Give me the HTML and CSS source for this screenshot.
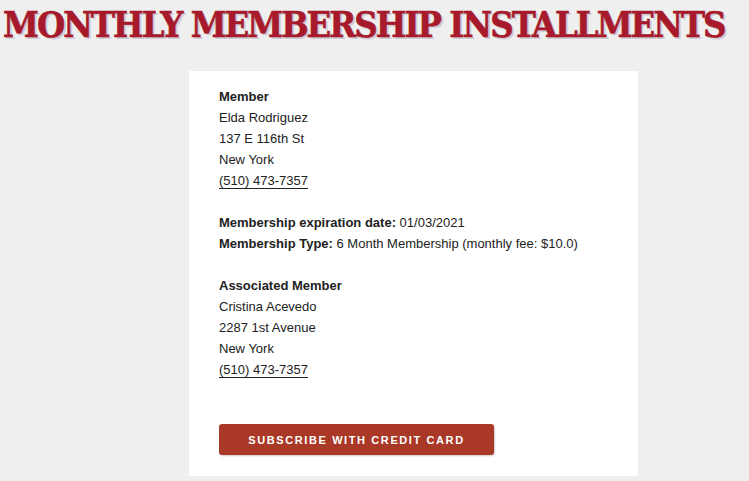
FILE: index.html
```html
<!DOCTYPE html>
<html>
<head>
<meta charset="utf-8">
<link rel="stylesheet" href="styles.css">
</head>
<body>
<h1 class="title">MONTHLY MEMBERSHIP INSTALLMENTS</h1>
<div class="card">
  <div class="block">
    <div class="label">Member</div>
    <div>Elda Rodriguez</div>
    <div>137 E 116th St</div>
    <div>New York</div>
    <div><a class="phone">(510) 473-7357</a></div>
  </div>
  <div class="block">
    <div><span class="label">Membership expiration date:</span> 01/03/2021</div>
    <div><span class="label">Membership Type:</span> 6 Month Membership (monthly fee: $10.0)</div>
  </div>
  <div class="block">
    <div class="label">Associated Member</div>
    <div>Cristina Acevedo</div>
    <div>2287 1st Avenue</div>
    <div>New York</div>
    <div><a class="phone">(510) 473-7357</a></div>
  </div>
  <button class="btn">SUBSCRIBE WITH CREDIT CARD</button>
</div>
</body>
</html>
```
FILE: styles.css
```css
html, body {
  margin: 0;
  padding: 0;
  background: #efefef;
}
body {
  font-family: "Liberation Sans", Arial, sans-serif;
  font-size: 13px;
  line-height: 21px;
  color: #222;
}
.title {
  margin: 0;
  padding: 4px 0 0 3px;
  font-family: "DejaVu Serif Condensed", "DejaVu Serif", serif;
  font-stretch: condensed;
  font-weight: bold;
  font-size: 36px;
  line-height: 40px;
  letter-spacing: -1.95px;
  color: #a71a2b;
  -webkit-text-stroke: 0.6px #a71a2b;
  text-shadow: 2px 2px 0 #cfccd6;
  white-space: nowrap;
}
.card {
  width: 389px;
  margin: 27px 0 0 189px;
  background: #fff;
  padding: 15px 30px 21px 30px;
}
.block {
  margin-bottom: 21px;
}
.label {
  font-weight: bold;
}
.phone {
  color: #222;
  text-decoration: none;
  border-bottom: 1px solid #222;
}
.btn {
  display: block;
  margin-top: 44px;
  width: 275px;
  height: 31px;
  border: none;
  border-radius: 3px;
  background: #aa3826;
  color: #fff;
  font-family: "Liberation Sans", Arial, sans-serif;
  font-weight: bold;
  font-size: 11px;
  letter-spacing: 1.6px;
  box-shadow: 1px 1px 2px rgba(0,0,0,0.2);
  padding: 0;
}
```
